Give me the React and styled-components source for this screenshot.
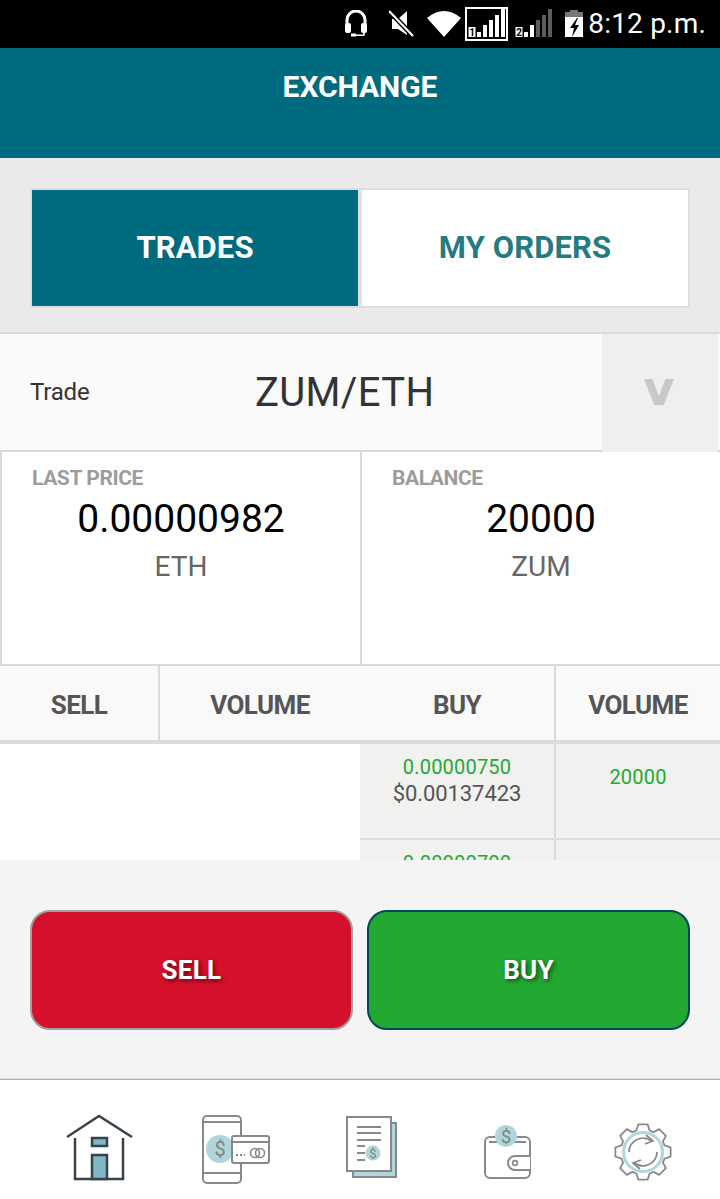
import React from "react";
import styled, { createGlobalStyle } from "styled-components";

const Global = createGlobalStyle`
  html, body { margin: 0; padding: 0; background: #fff; }
  * { box-sizing: border-box; }
  body { font-family: Roboto, "Liberation Sans", sans-serif; }
`;
const Page = styled.div`width: 720px; height: 1199px; overflow: hidden; display: flex; flex-direction: column;`;
const StatusBar = styled.div`height: 48px; background: #000; color: #fff; display: flex; align-items: center; justify-content: flex-end; padding-right: 14px;`;
const StatusIcon = styled.svg`display: block; flex: none; margin-left: ${p => p.$ml}px;`;
const Clock = styled.span`font-size: 28px; line-height: 48px; margin-left: 5px; white-space: nowrap; letter-spacing: .2px;`;
const Header = styled.header`height: 110px; background: #006a7e; color: #fff; text-align: center; font-size: 30px; font-weight: 700; line-height: 78px; letter-spacing: -.05px;`;
const TabArea = styled.div`height: 176px; padding: 30px 30px 0; background: #eaeaea; border-bottom: 2px solid #d9d9d9;`;
const Tabs = styled.div`height: 120px; display: grid; grid-template-columns: 326px 326px; column-gap: 4px; padding: 2px; background: #dfdfdf;`;
const Tab = styled.div`display: flex; align-items: center; justify-content: center; font-size: 31px; font-weight: 700; letter-spacing: .1px; padding-bottom: 2px;
  background: ${p => (p.$active ? "#006a7e" : "#fff")}; color: ${p => (p.$active ? "#fff" : "#267a82")};`;
const TradeRow = styled.div`height: 118px; display: flex;`;
const TradeMain = styled.div`flex: 1; display: flex; align-items: center; position: relative; background: #fafafa; border-bottom: 2px solid #d9d9d9; padding-left: 30px;`;
const TradeLabel = styled.span`font-size: 24px; color: #333; width: 225px; letter-spacing: -.2px;`;
const Pair = styled.span`font-size: 40px; color: #333; letter-spacing: .35px;`;
const Dropdown = styled.div`width: 116px; background: #efefef; color: #c8c8c8; display: flex; align-items: center; justify-content: center;
  font: 700 48px "DejaVu Sans", sans-serif; padding: 0 2px 10px 0;`;
const TradeEnd = styled.div`width: 2px; background: #fafafa; border-bottom: 2px solid #d9d9d9;`;
const Prices = styled.div`height: 214px; display: grid; grid-template-columns: 362px 358px; border-bottom: 2px solid #d9d9d9; background: #fff;`;
const PriceCard = styled.div`border-right: 2px solid #d9d9d9; border-left: ${p => (p.$first ? "2px solid #d9d9d9" : "none")}; text-align: center; padding-top: 14px; position: relative;
  &:last-child { border-right: none; }`;
const PriceLabel = styled.div`font-size: 21px; font-weight: 700; color: #9c9c9c; text-align: left; padding-left: 30px; line-height: 25px; letter-spacing: -.4px;`;
const PriceValue = styled.div`font-size: 39px; color: #000; line-height: 54px; padding-top: 1px;`;
const PriceUnit = styled.div`font-size: 28px; color: #666; line-height: 42px;`;
const TableHead = styled.div`height: 78px; display: grid; grid-template-columns: 160px 200px 196px 164px; background: #f9f9f9; border-bottom: 4px solid #dcdcdc;`;
const HeadCell = styled.div`display: flex; align-items: center; justify-content: center; font-size: 26px; font-weight: 700; color: #555; letter-spacing: -.55px; padding-top: 4px;
  border-right: ${p => (p.$line ? "2px solid #d9d9d9" : "none")};`;
const TableBody = styled.div`height: 116px; overflow: hidden; padding-left: 360px; background: #fff;`;
const BookRow = styled.div`height: 96px; display: grid; grid-template-columns: 196px 164px; background: #f1f1f0; border-bottom: 2px solid #dcdcdc;`;
const BookCell = styled.div`text-align: center; font-size: 20px; line-height: 27px; padding-top: 10px; letter-spacing: .2px; border-right: ${p => (p.$line ? "2px solid #d9d9d9" : "none")};`;
const VolCell = styled(BookCell)`padding-top: 20px;`;
const Green = styled.div`color: #22aa33;`;
const Usd = styled.div`color: #555; font-size: 22px; letter-spacing: -.1px; margin-top: -1px;`;
const Actions = styled.div`height: 218px; background: #f4f4f4; padding: 50px 30px 0; display: grid; grid-template-columns: 323px 323px; column-gap: 14px; align-items: start;`;
const ActionButton = styled.button`height: 120px; border-radius: 20px; border: 2px solid ${p => p.$border}; background: ${p => p.$bg}; color: #fff; padding: 0;
  font: 700 26px Roboto, sans-serif; letter-spacing: .3px; text-shadow: 2px 2px 4px rgba(0,0,0,.55);`;
const Nav = styled.nav`flex: 1; background: #fff; border-top: 1px solid #dedede; box-shadow: inset 0 1px 0 #8fbac6; padding: 34px 0 0 31px; display: grid; grid-template-columns: repeat(5, 136px); align-content: start; justify-items: center;`;
const NavIcon = styled.svg`display: block; width: 72px; height: 72px;`;
const Dollar = styled.text`font-family: Roboto, sans-serif; fill: #7d8488; text-anchor: middle;`;
const SimDigit = styled.text`font: 700 10px Roboto, sans-serif; fill: #000; text-anchor: middle;`;

const G = "#87898b", B = "#b0d6dc";

const gearPoints = (() => {
  const pts = [];
  const n = 8, R = 28, r = 22.5;
  for (let i = 0; i < n; i++) {
    const a = (i * 2 * Math.PI) / n - Math.PI / 2;
    const w1 = 0.22, w2 = 0.17;
    [[r, -w1 * 1.35], [R, -w2], [R, w2], [r, w1 * 1.35]].forEach(([rad, d]) => {
      pts.push(`${(36 + rad * Math.cos(a + d)).toFixed(1)},${(39 + rad * Math.sin(a + d)).toFixed(1)}`);
    });
  }
  return pts.join(" ");
})();

const BAR_HEIGHTS = [5, 12, 17, 22, 28];
const Signal = ({ x, on, digit, digitX }) => (
  <>
    {BAR_HEIGHTS.map((h, i) => (
      <rect key={i} x={x + i * 6} y={30 - h} width="4" height={h} fill={i < on ? "#fff" : "#5c5c5c"} />
    ))}
    <rect x={digitX} y="20" width="7" height="10" fill="#fff" />
    <SimDigit x={digitX + 3.5} y="29">{digit}</SimDigit>
  </>
);

export default function App() {
  return (
    <Page>
      <Global />
      <StatusBar>
        <StatusIcon width="24" height="28" viewBox="0 0 24 28" fill="none" $ml={0}>
          <path d="M3 16V10a9 9 0 0 1 18 0v6" stroke="#fff" strokeWidth="3" />
          <rect x="1" y="13" width="6" height="10" rx="2" fill="#fff" />
          <rect x="17" y="13" width="6" height="10" rx="2" fill="#fff" />
          <path d="M20 22v2.5a.8.8 0 0 1-.8.8H10" stroke="#fff" strokeWidth="1.6" />
          <rect x="7" y="23.5" width="5" height="3" fill="#fff" />
        </StatusIcon>
        <StatusIcon width="26" height="28" viewBox="0 0 26 28" $ml={21}>
          <path d="M3 9h6L18 1V25L9 19H3z" fill="#fff" />
          <path d="M0 1L24 26" stroke="#000" strokeWidth="5" />
          <path d="M0 1L24 26" stroke="#fff" strokeWidth="2.2" />
        </StatusIcon>
        <StatusIcon width="34" height="28" viewBox="0 0 34 28" $ml={12}>
          <path d="M0 8Q17-6 34 8L17 27z" fill="#fff" />
        </StatusIcon>
        <StatusIcon width="43" height="34" viewBox="0 0 43 34" $ml={4}>
          <rect x="1" y="1" width="41" height="32" fill="none" stroke="#fff" strokeWidth="2" />
          <Signal x={12} on={5} digit="1" digitX={3.5} />
        </StatusIcon>
        <StatusIcon width="38" height="34" viewBox="0 0 38 34" $ml={6}>
          <Signal x={10} on={2} digit="2" digitX={1.5} />
        </StatusIcon>
        <StatusIcon width="18" height="28" viewBox="0 0 18 28" $ml={13}>
          <path d="M5 0h8v2H5z" fill="#777" />
          <path d="M0 2h18v5H0z" fill="#777" />
          <path d="M0 7h18v20H0z" fill="#fff" />
          <path d="M12 8L5 18h4L7 27L14 15H10L13 8z" fill="#000" />
        </StatusIcon>
        <Clock>8:12 p.m.</Clock>
      </StatusBar>

      <Header>EXCHANGE</Header>

      <TabArea>
        <Tabs>
          <Tab $active>TRADES</Tab>
          <Tab>MY ORDERS</Tab>
        </Tabs>
      </TabArea>

      <TradeRow>
        <TradeMain>
          <TradeLabel>Trade</TradeLabel>
          <Pair>ZUM/ETH</Pair>
        </TradeMain>
        <Dropdown>v</Dropdown>
        <TradeEnd />
      </TradeRow>

      <Prices>
        <PriceCard $first>
          <PriceLabel>LAST PRICE</PriceLabel>
          <PriceValue>0.00000982</PriceValue>
          <PriceUnit>ETH</PriceUnit>
        </PriceCard>
        <PriceCard>
          <PriceLabel>BALANCE</PriceLabel>
          <PriceValue>20000</PriceValue>
          <PriceUnit>ZUM</PriceUnit>
        </PriceCard>
      </Prices>

      <TableHead>
        <HeadCell $line>SELL</HeadCell>
        <HeadCell>VOLUME</HeadCell>
        <HeadCell $line>BUY</HeadCell>
        <HeadCell>VOLUME</HeadCell>
      </TableHead>
      <TableBody>
        <BookRow>
          <BookCell $line>
            <Green>0.00000750</Green>
            <Usd>$0.00137423</Usd>
          </BookCell>
          <VolCell><Green>20000</Green></VolCell>
        </BookRow>
        <BookRow>
          <BookCell $line>
            <Green>0.00000700</Green>
          </BookCell>
          <VolCell />
        </BookRow>
      </TableBody>

      <Actions>
        <ActionButton $bg="#d5102a" $border="#a0a0a0">SELL</ActionButton>
        <ActionButton $bg="#23a932" $border="#04465a">BUY</ActionButton>
      </Actions>

      <Nav>
        <NavIcon viewBox="0 0 72 72" fill="none">
          <path d="M12 25V66H60V25" stroke="#37424a" strokeWidth="2.5" />
          <path d="M4 24L36 3L69 24" stroke="#37424a" strokeWidth="2.5" />
          <rect x="29" y="25" width="15" height="8" fill="#7fb7c5" stroke="#37424a" strokeWidth="2.5" />
          <rect x="29" y="42" width="15" height="24" fill="#7fb7c5" stroke="#37424a" strokeWidth="2.5" />
        </NavIcon>
        <NavIcon viewBox="-1 0 72 72" fill="none">
          <rect x="3" y="3" width="38" height="67" rx="4" stroke={G} strokeWidth="2" />
          <path d="M3 9H41M3 60H41" stroke={G} strokeWidth="2" />
          <circle cx="20" cy="36" r="14" fill={B} />
          <Dollar x="20" y="43" fontSize="20">$</Dollar>
          <rect x="32" y="23" width="37" height="27" rx="2" fill="#fff" stroke={G} strokeWidth="2" />
          <path d="M32 29H69" stroke={G} strokeWidth="2" />
          <path d="M36 42H45" stroke={G} strokeWidth="2" strokeDasharray="2 2" />
          <circle cx="55" cy="40" r="4.5" stroke={G} strokeWidth="1.6" />
          <circle cx="60" cy="40" r="4.5" stroke={G} strokeWidth="1.6" />
        </NavIcon>
        <NavIcon viewBox="0 0 72 72" fill="none">
          <rect x="18" y="10" width="43" height="54" fill={B} stroke={G} strokeWidth="2" />
          <rect x="12" y="4" width="44" height="54" fill="#fff" stroke={G} strokeWidth="2" />
          <path d="M22 14H46M22 20H46M22 27H46M22 33H30M22 40H30M22 47H30" stroke={G} strokeWidth="2" />
          <circle cx="38" cy="40" r="7.5" fill={B} />
          <Dollar x="38" y="45" fontSize="13">$</Dollar>
        </NavIcon>
        <NavIcon viewBox="0 0 72 72" fill="none">
          <rect x="14" y="24" width="45" height="41" rx="5" stroke={G} strokeWidth="2" />
          <path d="M18 29H55" stroke={G} strokeWidth="2" />
          <path d="M59 43H44a7 7 0 0 0 0 14H59" fill="#fff" stroke={G} strokeWidth="2" />
          <circle cx="44" cy="50" r="2.4" stroke={G} strokeWidth="1.6" />
          <circle cx="35" cy="23" r="11" fill={B} />
          <Dollar x="35" y="30" fontSize="19">$</Dollar>
        </NavIcon>
        <NavIcon viewBox="0 0 72 72" fill="none">
          <polygon points={gearPoints} stroke={G} strokeWidth="1.8" strokeLinejoin="round" />
          <circle cx="36" cy="39" r="19.5" stroke={B} strokeWidth="3" />
          <path d="M22 39a14 14 0 0 1 23-10.5M50 39a14 14 0 0 1-23 10.5" stroke={G} strokeWidth="1.8" />
          <path d="M39 22l7 6-8 3M33 56l-7-6 8-3" stroke={G} strokeWidth="1.8" />
        </NavIcon>
      </Nav>
    </Page>
  );
}
